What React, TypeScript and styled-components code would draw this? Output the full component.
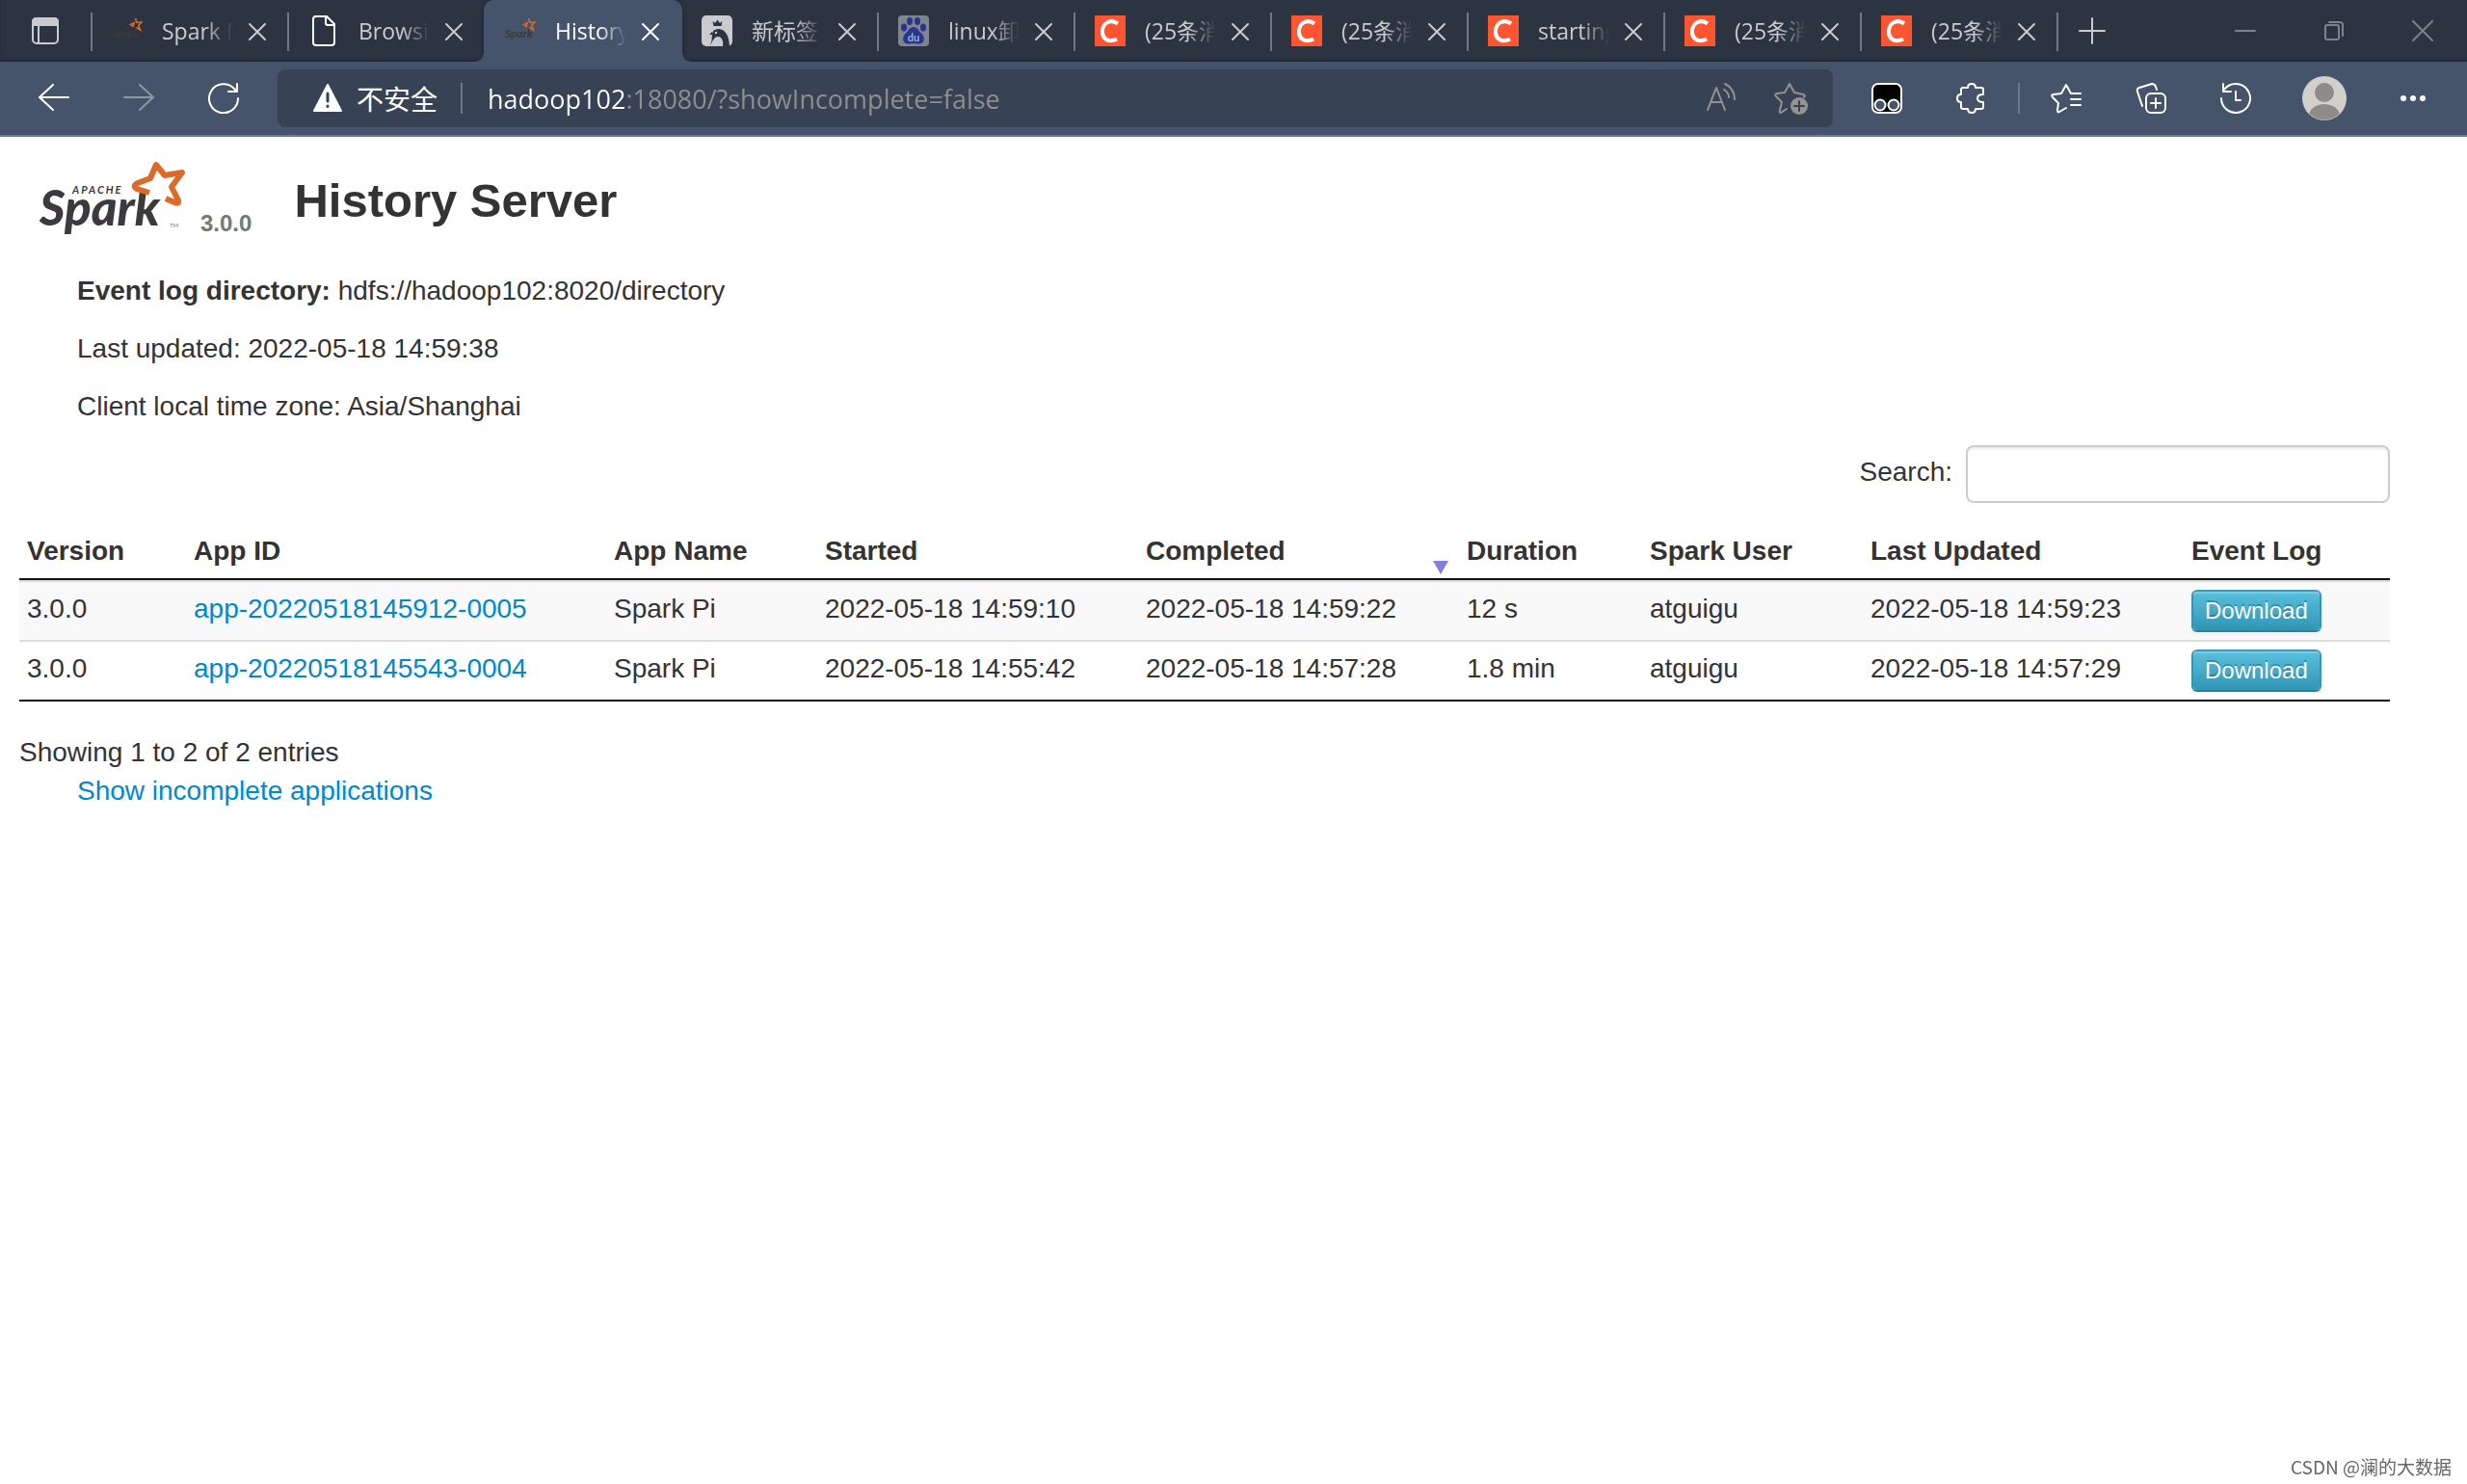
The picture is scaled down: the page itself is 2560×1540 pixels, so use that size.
import React from "react";
import styled, { createGlobalStyle, css } from "styled-components";

const uiFont = `"Open Sans", "Noto Sans CJK SC", sans-serif`;
const pageFont = `"Liberation Sans", Arial, sans-serif`;

const GlobalStyle = createGlobalStyle`
  *, *::before, *::after { box-sizing: border-box; }
  body { margin: 0; background: #fff; color: #333; font: 28px/40px ${pageFont}; }
  button { font: inherit; color: inherit; border: 0; padding: 0; background: none; cursor: pointer; }
  svg { display: block; flex: none; }
`;

const Window = styled.div`
  display: flex;
  flex-direction: column;
  min-height: 100vh;
`;

/* ---------- tab strip ---------- */

const TabStrip = styled.header`
  display: flex;
  align-items: stretch;
  height: 64px;
  background: #2b3440;
  box-shadow: inset 0 -2px 2px #222a34;
  color: #c9cbce;
  font: 23px/32px ${uiFont};
`;

const StripButton = styled.button<{ $width: number }>`
  display: flex;
  align-items: center;
  justify-content: center;
  width: ${(p) => p.$width}px;
`;

const Tabs = styled.nav`
  display: flex;
  flex: 0 1 auto;
  min-width: 0;
`;

const divider = css`
  &::before {
    content: "";
    position: absolute;
    left: 0;
    top: 13px;
    width: 2px;
    height: 40px;
    background: #717980;
  }
`;

const activeTab = css`
  z-index: 1;
  width: 206px;
  margin-right: -2px;
  background: #45546a;
  color: #fff;
  border-radius: 10px 10px 0 0;
  box-shadow: 0 0 4px #1c232c;
  clip-path: inset(0 -8px 0 -8px);
  &::before, &::after {
    content: "";
    position: absolute;
    bottom: 0;
    width: 8px;
    height: 8px;
  }
  &::before { left: -8px; background: radial-gradient(circle at 0 0, #0000 7px, #45546a 8px); }
  &::after { right: -8px; background: radial-gradient(circle at 100% 0, #0000 7px, #45546a 8px); }
`;

const Tab = styled.div<{ $active?: boolean; $divided?: boolean }>`
  position: relative;
  display: flex;
  align-items: center;
  width: 204px;
  ${(p) => p.$divided && divider}
  ${(p) => p.$active && activeTab}
`;

const TabMain = styled.button`
  display: flex;
  align-items: center;
  gap: 20px;
  width: 148px;
  height: 100%;
  padding-left: 22px;
  text-align: left;
`;

const TabTitle = styled.span`
  width: 74px;
  overflow: hidden;
  white-space: nowrap;
  mask-image: linear-gradient(90deg, #000 60%, #0000 100%);
`;

const CloseTab = styled.button`
  display: flex;
  align-items: center;
  justify-content: center;
  width: 50px;
  height: 100%;
`;

const NewTab = styled(StripButton)`
  position: relative;
  ${divider}
`;

const WindowControls = styled.div`
  display: flex;
  margin-left: auto;
  color: #7c838a;
`;

/* ---------- toolbar ---------- */

const Toolbar = styled.div`
  display: flex;
  align-items: center;
  height: 78px;
  border-bottom: 2px solid #6d7a8e;
  background: #45546a;
  color: #fff;
  font: 27px/40px ${uiFont};
`;

const ToolGroup = styled.div`
  display: flex;
  align-items: center;
  padding: 0 12px;
`;

const ToolButton = styled.button<{ $dim?: boolean; $wide?: boolean }>`
  display: flex;
  align-items: center;
  justify-content: center;
  width: ${(p) => (p.$wide ? 96 : 88)}px;
  height: 60px;
  color: ${(p) => (p.$dim ? "#8e97a4" : "#fff")};
`;

const AddressBar = styled.form`
  display: flex;
  flex: 1;
  align-items: center;
  height: 60px;
  padding-right: 8px;
  border-radius: 8px;
  background: #374354;
`;

const SiteInfo = styled.button`
  display: flex;
  align-items: center;
  gap: 14px;
  padding: 0 20px 0 36px;
  font: 28px/40px "Noto Sans CJK SC", sans-serif;
`;

const Rule = styled.span`
  width: 2px;
  height: 32px;
  margin: 0 4px;
  background: #6f7985;
`;

const Url = styled.input`
  flex: 1;
  min-width: 0;
  height: 56px;
  margin-left: 22px;
  padding: 0;
  border: 0;
  outline: 0;
  font: inherit;
  color: #8f8f8f;
  background: linear-gradient(90deg, #fff 144px, #8f8f8f 144px);
  background-clip: text;
  -webkit-text-fill-color: transparent;
`;

const AddressButton = styled(ToolButton)`
  width: 72px;
  color: #95938f;
`;

/* ---------- page ---------- */

const Page = styled.main`
  flex: 1;
  padding: 24px 80px 40px 20px;
`;

const Masthead = styled.div`
  display: flex;
  align-items: flex-end;
  height: 84px;
  padding-left: 20px;
`;

const Version = styled.span`
  margin-left: 12px;
  color: #777;
  font-weight: bold;
  font-size: 24px;
  line-height: 36px;
`;

const Title = styled.h1`
  margin: 0 0 0 44px;
  font-size: 49px;
  line-height: 84px;
`;

const Facts = styled.ul`
  list-style: none;
  margin: 0;
  padding: 32px 0 20px 60px;
  display: grid;
  gap: 20px;
`;

const SearchRow = styled.div`
  display: flex;
  justify-content: flex-end;
  gap: 14px;
  margin-bottom: 22px;
`;

const SearchLabel = styled.label`
  line-height: 56px;
`;

const SearchInput = styled.input`
  width: 440px;
  height: 60px;
  padding: 8px 12px;
  border: 2px solid #ccc;
  border-radius: 8px;
  box-shadow: inset 0 2px 2px rgba(0, 0, 0, 0.075);
  font: inherit;
`;

const Table = styled.table`
  width: 100%;
  table-layout: fixed;
  border-collapse: separate;
  border-spacing: 0;
  border-bottom: 2px solid #111;
`;

const HeadCell = styled.th`
  position: relative;
  padding: 8px;
  border-bottom: 2px solid #111;
  text-align: left;
`;

const SortMark = styled.svg`
  position: absolute;
  right: 10px;
  bottom: 4px;
`;

const Row = styled.tr<{ $striped: boolean }>`
  background: ${(p) => (p.$striped ? "#f9f9f9" : "#fff")};
`;

const Cell = styled.td`
  padding: 8px;
  border-top: 2px solid #ddd;
  vertical-align: top;
`;

const Link = styled.a`
  color: #08c;
  text-decoration: none;
`;

const Download = styled.a`
  display: block;
  width: fit-content;
  padding: 0 12px;
  border: 2px solid;
  border-color: #3f9ab8 #3595b2 #2a7f99;
  border-radius: 6px;
  background: linear-gradient(#5bc0de, #2f96b4) padding-box;
  box-shadow: inset 0 2px 0 rgba(255, 255, 255, 0.2), 0 2px 4px rgba(0, 0, 0, 0.05);
  color: #fff;
  text-decoration: none;
  text-shadow: 0 -2px 0 rgba(0, 0, 0, 0.25);
  font-size: 24px;
  line-height: 40px;
`;

const Summary = styled.div`
  margin-top: 33px;
`;

const Incomplete = styled.div`
  padding-left: 60px;
`;

const Watermark = styled.div`
  position: fixed;
  right: 16px;
  bottom: 4px;
  color: #666;
  font: 19px/28px "Noto Sans CJK SC", sans-serif;
`;

/* ---------- drawings ---------- */

type IconProps = { size?: number; width?: number; children: React.ReactNode };
const Icon = ({ size = 32, width = 2, children }: IconProps) => (
  <svg width={size} height={size} viewBox={`0 0 ${size} ${size}`} fill="none" stroke="currentColor"
    strokeWidth={width} strokeLinecap="round" strokeLinejoin="round" aria-hidden="true">
    {children}
  </svg>
);

const Cross = () => <Icon size={20}><path d="M2 3 18 19M18 3 2 19" /></Icon>;

const SparkFavicon = () => (
  <svg width="32" height="32" viewBox="0 0 32 32" aria-hidden="true">
    <text x="0" y="23" fontFamily="Lato, sans-serif" fontStyle="italic" fontWeight="bold" fontSize="12" fill="#3c3a3e">Spark</text>
    <path d="M24.5 3 26 7.5 31 7 27.800 10.500 29.500 15 25.500 12.500 M22 11.500 19.500 9.500 23.300 7.800Z" fill="none" stroke="#e0662a" strokeWidth="1.600" />
  </svg>
);

const PageFavicon = () => (
  <Icon><path d="M7 1H19L27 9V28Q27 31 24 31H8Q5 31 5 28V4Q5 1 8 1ZM18 1V8Q18 10 20 10H27" stroke="#fff" /></Icon>
);

const SealFavicon = () => (
  <svg width="32" height="32" viewBox="0 0 32 32" aria-hidden="true">
    <rect width="32" height="32" rx="5" fill="#c9cbce" />
    <path d="M9 32Q11 26 11 20Q11 14 18 14Q28 15 29 32H22Q23 26 20 23Q17 21 14 23Q11 26 9 32ZM11 17 8 20 11 20Z" fill="#2b3440" />
    <circle cx="15" cy="18" r="1.200" fill="#c9cbce" />
    <path d="M11.500 6 14 8 16.500 4.500 19 8 21.500 6 20.500 11H12.500Z" fill="#2b3440" />
  </svg>
);

const PawFavicon = () => (
  <svg width="32" height="32" viewBox="0 0 32 32" aria-hidden="true">
    <rect width="32" height="32" rx="4" fill="#7f858c" />
    <g fill="#2a3390">
      <ellipse cx="6" cy="12.500" rx="3" ry="4" />
      <ellipse cx="12" cy="6" rx="3" ry="4" />
      <ellipse cx="20" cy="6" rx="3" ry="4" />
      <ellipse cx="26" cy="12.500" rx="3" ry="4" />
      <path d="M16 12C20 12 21 16 24 18.500C29 23 27 30 21 29.500Q16 28.500 11 29.500C5 30 3 23 8 18.500C11 16 12 12 16 12Z" />
    </g>
    <text x="16" y="27" textAnchor="middle" fontFamily="Lato, sans-serif" fontWeight="bold" fontSize="11" fill="#aab0c0">du</text>
  </svg>
);

const CFavicon = () => (
  <svg width="32" height="32" viewBox="0 0 32 32" aria-hidden="true">
    <rect width="32" height="32" fill="#fc5531" />
    <path d="M24 8.500C17 3.500 8.500 7 8 16C7.500 25 15 28.500 23 24.500" fill="none" stroke="#fff" strokeWidth="4" />
  </svg>
);

const SparkLogo = () => (
  <svg width="156" height="84" viewBox="0 0 156 84" role="img" aria-label="Apache Spark">
    <text x="35" y="35" fontFamily="Lato, sans-serif" fontStyle="italic" fontWeight="bold" fontSize="11" letterSpacing="2" fill="#3c3a3e">APACHE</text>
    <text x="1" y="68" fontFamily="Lato, sans-serif" fontStyle="italic" fontWeight="900" fontSize="51" fill="#3c3a3e">Spark</text>
    <path d="M115 34 102 30Q97 27 103 24L116 19 122 5 131 16 149 13 138 28 145 42Q146 46 141 44L132 40" fill="none" stroke="#dc6b2a" strokeWidth="6" strokeLinejoin="round" />
    <text x="136" y="70" fontFamily="Lato, sans-serif" fontSize="6" fill="#777">TM</text>
  </svg>
);

/* ---------- data ---------- */

const tabs = [
  { title: "Spark M", icon: SparkFavicon },
  { title: "Browsin", icon: PageFavicon },
  { title: "History", icon: SparkFavicon, active: true },
  { title: "新标签", icon: SealFavicon },
  { title: "linux卸", icon: PawFavicon },
  { title: "(25条消", icon: CFavicon },
  { title: "(25条消", icon: CFavicon },
  { title: "starting", icon: CFavicon },
  { title: "(25条消", icon: CFavicon },
  { title: "(25条消", icon: CFavicon },
];

const columns = [
  { label: "Version", width: 173 },
  { label: "App ID", width: 436 },
  { label: "App Name", width: 219 },
  { label: "Started", width: 333 },
  { label: "Completed", width: 333, sorted: true },
  { label: "Duration", width: 190 },
  { label: "Spark User", width: 229 },
  { label: "Last Updated", width: 333 },
  { label: "Event Log", width: 214 },
];

const apps = [
  { id: "app-20220518145912-0005", started: "2022-05-18 14:59:10", completed: "2022-05-18 14:59:22", duration: "12 s", updated: "2022-05-18 14:59:23" },
  { id: "app-20220518145543-0004", started: "2022-05-18 14:55:42", completed: "2022-05-18 14:57:28", duration: "1.8 min", updated: "2022-05-18 14:57:29" },
];

export default function App() {
  return (
    <Window>
      <GlobalStyle />
      <TabStrip>
        <StripButton $width={94} aria-label="Tab actions">
          <Icon><rect x="3" y="3" width="26" height="26" rx="4" /><path d="M3 10V7Q3 3 7 3H25Q29 3 29 7V10Z" fill="currentColor" /><path d="M9 10V29" /></Icon>
        </StripButton>
        <Tabs>
          {tabs.map((t, i) => (
            <Tab key={i} $active={t.active} $divided={!t.active && !tabs[i - 1]?.active}>
              <TabMain><t.icon /><TabTitle>{t.title}</TabTitle></TabMain>
              <CloseTab aria-label="Close tab"><Cross /></CloseTab>
            </Tab>
          ))}
        </Tabs>
        <NewTab $width={74} aria-label="New tab">
          <Icon><path d="M16 3V29M3 16H29" /></Icon>
        </NewTab>
        <WindowControls>
          <StripButton $width={92} aria-label="Minimize"><Icon><path d="M6 16H26" /></Icon></StripButton>
          <StripButton $width={92} aria-label="Restore"><Icon><rect x="7" y="10" width="14" height="15" rx="2" /><path d="M11 7H22Q25 7 25 10V21" /></Icon></StripButton>
          <StripButton $width={92} aria-label="Close"><Icon><path d="M6 6 26 26M26 6 6 26" /></Icon></StripButton>
        </WindowControls>
      </TabStrip>

      <Toolbar>
        <ToolGroup>
          <ToolButton aria-label="Back"><Icon><path d="M31 15H1M15 2 1 15 15 28" /></Icon></ToolButton>
          <ToolButton $dim aria-label="Forward"><Icon><path d="M1 15H31M17 2 31 15 17 28" /></Icon></ToolButton>
          <ToolButton aria-label="Refresh"><Icon><path d="M31 16A15 15 0 1 1 27 6L30 9M30 1V9H21" /></Icon></ToolButton>
        </ToolGroup>
        <AddressBar>
          <SiteInfo type="button">
            <Icon><path d="M16 2 30 29H2Z" fill="currentColor" /><path d="M16 11V19M16 24V24.500" stroke="#374354" strokeWidth="3" /></Icon>
            不安全
          </SiteInfo>
          <Rule />
          <Url aria-label="Address" defaultValue="hadoop102:18080/?showIncomplete=false" />
          <AddressButton type="button" aria-label="Read aloud"><Icon><path d="M2 28 11 5 20 28M5 20H17M19 7Q24 10 24 15M20 1Q30 6 30 17" /></Icon></AddressButton>
          <AddressButton type="button" aria-label="Add favorite">
            <Icon size={36}><path d="M14 29 8 33Q6 33 7 30L9 22 3 16Q1 14 4 13L12 12 17 3 22 12 31 14Q34 15 32 17" /><circle cx="27" cy="26" r="9" fill="currentColor" stroke="none" /><path d="M27 21V31M22 26H32" stroke="#374354" /></Icon>
          </AddressButton>
        </AddressBar>
        <ToolGroup>
          <ToolButton aria-label="Tampermonkey"><Icon><rect x="1" y="1" width="30" height="30" rx="6" fill="#000" /><circle cx="9" cy="23" r="5.500" fill="#45546a" /><circle cx="23" cy="23" r="5.500" fill="#45546a" /></Icon></ToolButton>
          <ToolButton aria-label="Extensions"><Icon><path d="M5 7Q5 5 7 5H12Q12 1 16 1Q20 1 20 5H26Q28 5 28 7V12Q22 12 22 16Q22 20 28 20V25Q28 27 26 27H20Q20 31 16 31Q12 31 12 27H7Q5 27 5 25V20Q1 20 1 16Q1 12 5 12Z" /></Icon></ToolButton>
          <Rule />
          <ToolButton aria-label="Favorites"><Icon><path d="M16 26 9 30Q7 31 7 28L8 21 2 15Q0 12 3 12L11 11 16 2 21 11H31M21 17H31M21 23H31" /></Icon></ToolButton>
          <ToolButton aria-label="Collections"><Icon><rect x="11" y="11" width="20" height="20" rx="5" /><path d="M21 16V26M16 21H26M7 24 2 9Q1 6 4 5L17 1Q20 1 21 4L22 7" /></Icon></ToolButton>
          <ToolButton aria-label="History"><Icon><path d="M1 16A15 15 0 1 0 4 7M3 1V9H11M16 9V18H21" /></Icon></ToolButton>
          <ToolButton $wide aria-label="Profile">
            <svg width="46" height="46" viewBox="0 0 46 46" aria-hidden="true">
              <circle cx="23" cy="23" r="23" fill="#d2d0cd" />
              <circle cx="23" cy="17" r="10" fill="#8f8b87" />
              <path d="M7 39Q11 29 23 29Q35 29 39 39Q23 52 7 39Z" fill="#8f8b87" />
            </svg>
          </ToolButton>
          <ToolButton aria-label="Settings"><Icon><g fill="currentColor" stroke="none"><circle cx="6" cy="16" r="3" /><circle cx="16" cy="16" r="3" /><circle cx="26" cy="16" r="3" /></g></Icon></ToolButton>
        </ToolGroup>
      </Toolbar>

      <Page>
        <Masthead>
          <SparkLogo />
          <Version>3.0.0</Version>
          <Title>History Server</Title>
        </Masthead>
        <Facts>
          <li><strong>Event log directory:</strong> hdfs://hadoop102:8020/directory</li>
          <li>Last updated: 2022-05-18 14:59:38</li>
          <li>Client local time zone: Asia/Shanghai</li>
        </Facts>
        <SearchRow>
          <SearchLabel htmlFor="search">Search:</SearchLabel>
          <SearchInput id="search" type="text" />
        </SearchRow>
        <Table>
          <colgroup>{columns.map((c) => <col key={c.label} width={c.width} />)}</colgroup>
          <thead>
            <tr>
              {columns.map((c) => (
                <HeadCell key={c.label} scope="col" aria-sort={c.sorted ? "descending" : undefined}>
                  {c.label}
                  {c.sorted && <SortMark width="18" height="14" viewBox="0 0 18 14" aria-hidden="true"><path d="M1 0H17L9 14Z" fill="#8080e0" /></SortMark>}
                </HeadCell>
              ))}
            </tr>
          </thead>
          <tbody>
            {apps.map((a, i) => (
              <Row key={a.id} $striped={i % 2 === 0}>
                <Cell>3.0.0</Cell>
                <Cell><Link href="#">{a.id}</Link></Cell>
                <Cell>Spark Pi</Cell>
                <Cell>{a.started}</Cell>
                <Cell>{a.completed}</Cell>
                <Cell>{a.duration}</Cell>
                <Cell>atguigu</Cell>
                <Cell>{a.updated}</Cell>
                <Cell><Download href="#">Download</Download></Cell>
              </Row>
            ))}
          </tbody>
        </Table>
        <Summary>Showing 1 to 2 of 2 entries</Summary>
        <Incomplete><Link href="#">Show incomplete applications</Link></Incomplete>
      </Page>
      <Watermark>CSDN @澜的大数据</Watermark>
    </Window>
  );
}
